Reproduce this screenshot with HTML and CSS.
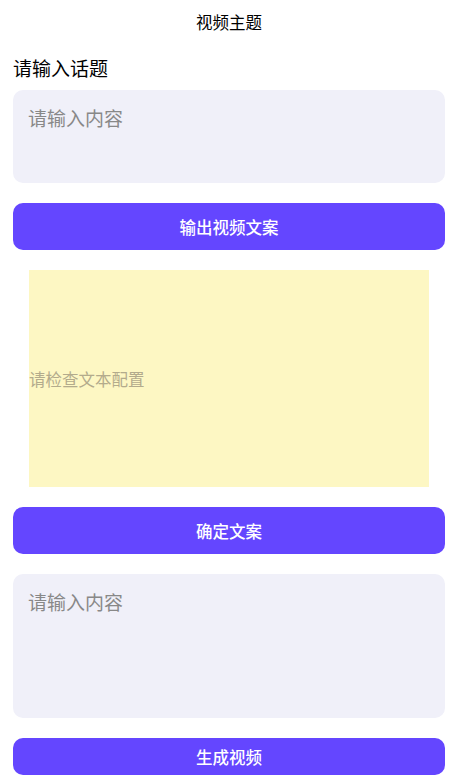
FILE: index.html
```html
<!DOCTYPE html>
<html lang="zh-CN">
<head>
<meta charset="utf-8">
<title>视频主题</title>
<link rel="stylesheet" href="styles.css">
</head>
<body>
<div class="page">
  <header class="header">视频主题</header>
  <div class="label">请输入话题</div>
  <textarea class="input input-short" placeholder="请输入内容"></textarea>
  <button class="btn btn-tall">输出视频文案</button>
  <div class="preview"><span class="preview-text">请检查文本配置</span></div>
  <button class="btn btn-tall">确定文案</button>
  <textarea class="input input-long" placeholder="请输入内容"></textarea>
  <button class="btn btn-short">生成视频</button>
</div>
</body>
</html>
```
FILE: styles.css
```css
html, body {
  margin: 0;
  padding: 0;
  background: #ffffff;
}
body {
  font-family: "Noto Sans CJK SC", "Noto Sans", sans-serif;
  color: #000;
}
.page {
  width: 432px;
  margin-left: 13px;
  display: flex;
  flex-direction: column;
}
.header {
  height: 44px;
  line-height: 44px;
  text-align: center;
  font-size: 16.5px;
}
.label {
  font-size: 19px;
  line-height: 28px;
  margin-top: 10px;
  margin-bottom: 8px;
}
.input {
  display: block;
  box-sizing: border-box;
  width: 100%;
  border: none;
  outline: none;
  resize: none;
  background: #f0f0f9;
  border-radius: 10px;
  padding: 8px 15px;
  font-family: "Noto Sans CJK SC", "Noto Sans", sans-serif;
  font-size: 19px;
  line-height: 40px;
  color: #333;
  margin: 0 0 20px 0;
}
.input::placeholder {
  color: #888888;
}
.input-short { height: 93px; }
.input-long { height: 144px; }
.btn {
  display: block;
  width: 100%;
  border: none;
  border-radius: 10px;
  background: #6446ff;
  color: #fff;
  font-family: "Noto Sans CJK SC", "Noto Sans", sans-serif;
  font-size: 16.5px;
  font-weight: 500;
  padding: 0;
  margin: 0 0 20px 0;
}
.btn-tall { height: 47px; }
.btn-short { height: 37px; }
.preview {
  align-self: center;
  width: 400px;
  height: 217px;
  background: #fdf7c3;
  display: flex;
  align-items: center;
  margin-bottom: 20px;
}
.preview-text {
  font-size: 16.5px;
  color: #b3ab8c;
}
```
